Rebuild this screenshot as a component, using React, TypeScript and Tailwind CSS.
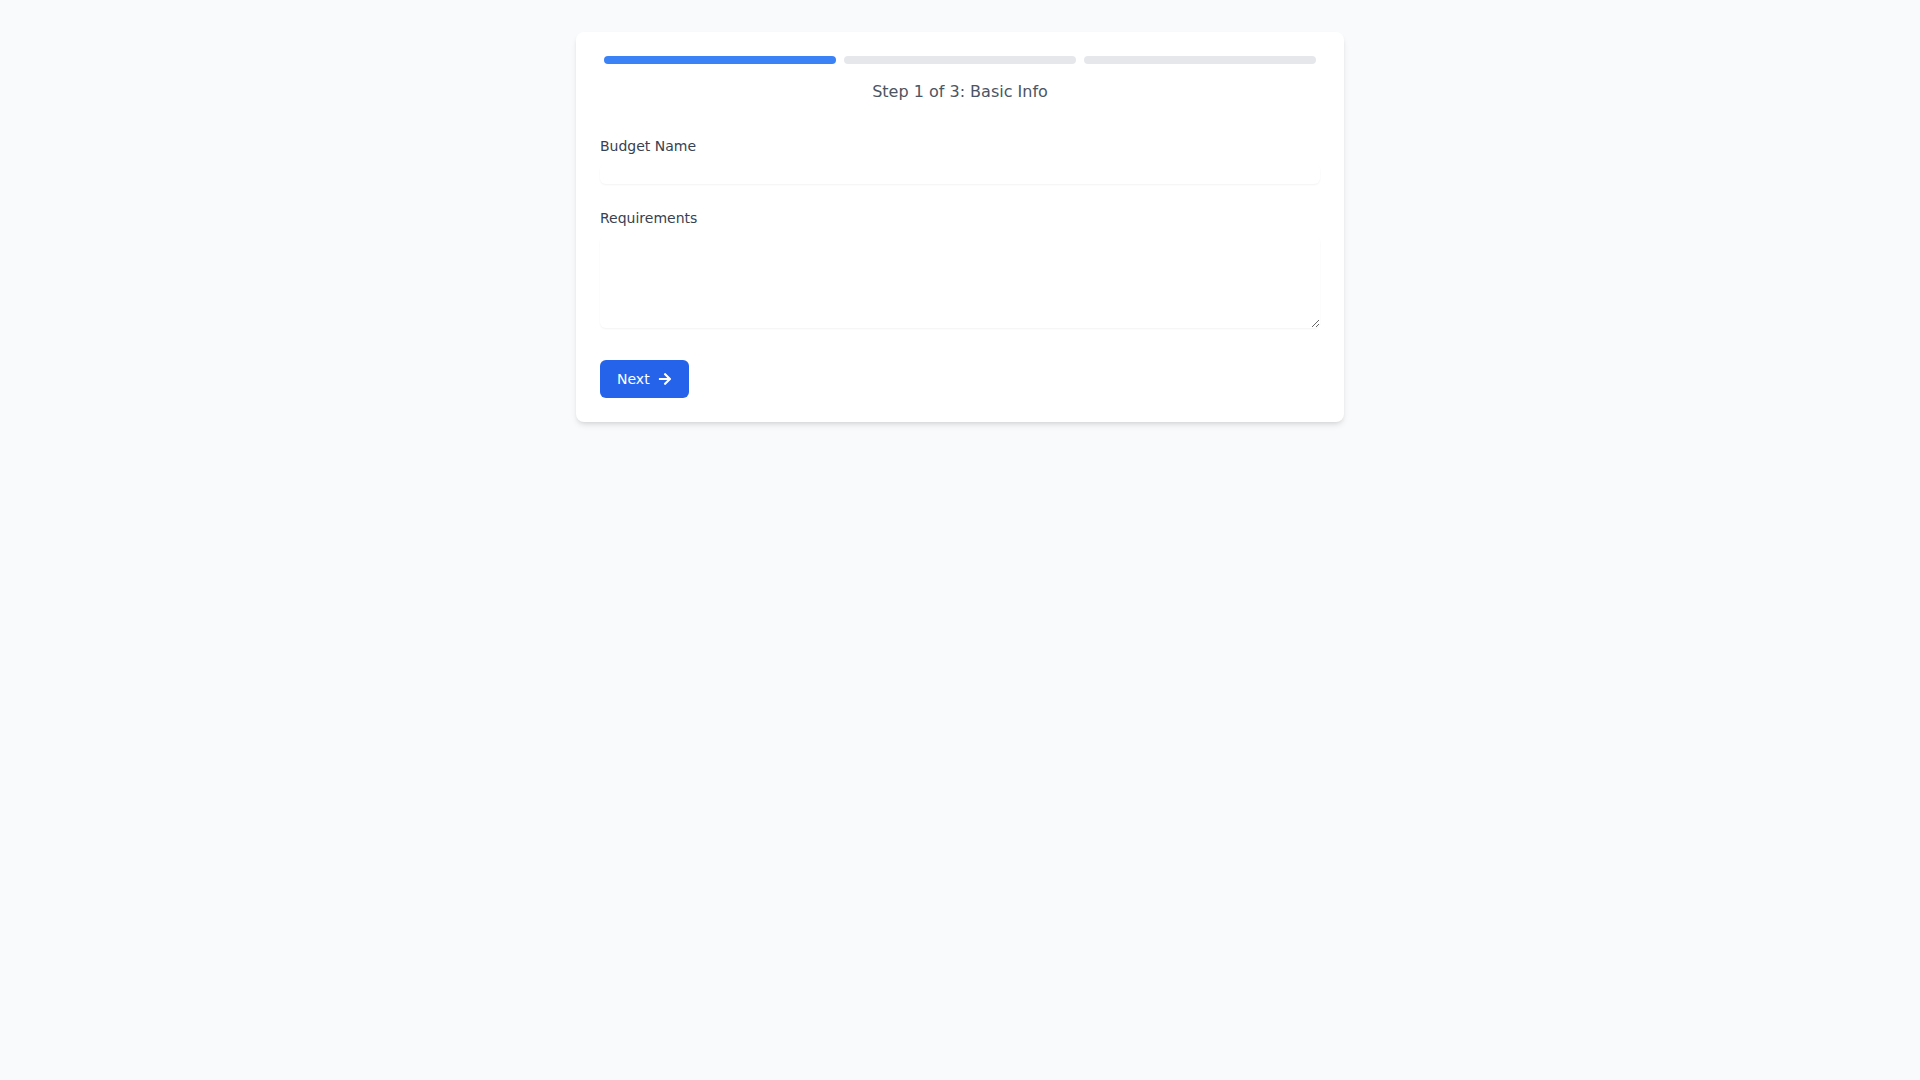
import React from 'react';
import { FaArrowRight } from 'react-icons/fa';

const steps = ['Basic Info', 'Details', 'Review'];

export default function App() {
  const current = 0;
  return (
    <div className="min-h-screen bg-[#f9fafb] pt-8 font-['DejaVu_Sans',sans-serif]">
      <div className="max-w-3xl mx-auto bg-white rounded-lg shadow-md p-6">
        {/* Progress */}
        <div className="flex">
          {steps.map((s, i) => (
            <div
              key={s}
              className={i <= current ? 'flex-1 mx-1 h-2 rounded-full bg-[#3b82f6]' : 'flex-1 mx-1 h-2 rounded-full bg-[#e5e7eb]'}
            />
          ))}
        </div>
        <p className="mt-4 text-center text-base text-[#4b5563]">
          Step {current + 1} of {steps.length}: {steps[current]}
        </p>

        <form className="mt-8 space-y-6" onSubmit={(e) => e.preventDefault()}>
          <div>
            <label htmlFor="name" className="block text-sm text-[#374151]">
              Budget Name
            </label>
            <input
              id="name"
              type="text"
              className="mt-2 block w-full rounded-md shadow-[0_1px_2px_0_rgba(0,0,0,0.05)] text-sm outline-none"
            />
          </div>
          <div>
            <label htmlFor="req" className="block text-sm text-[#374151]">
              Requirements
            </label>
            <textarea
              id="req"
              rows={4}
              className="mt-2 block w-full h-[92px] rounded-md shadow-[0_1px_2px_0_rgba(0,0,0,0.05)] text-sm outline-none"
            />
          </div>
          <div className="pt-2">
            <button
              type="submit"
              className="inline-flex items-center px-4 py-2 border border-transparent text-sm rounded-md text-white bg-[#2563eb] hover:bg-[#1d4ed8]"
            >
              Next
              <FaArrowRight className="ml-2 w-[14px] h-[14px]" />
            </button>
          </div>
        </form>
      </div>
    </div>
  );
}
